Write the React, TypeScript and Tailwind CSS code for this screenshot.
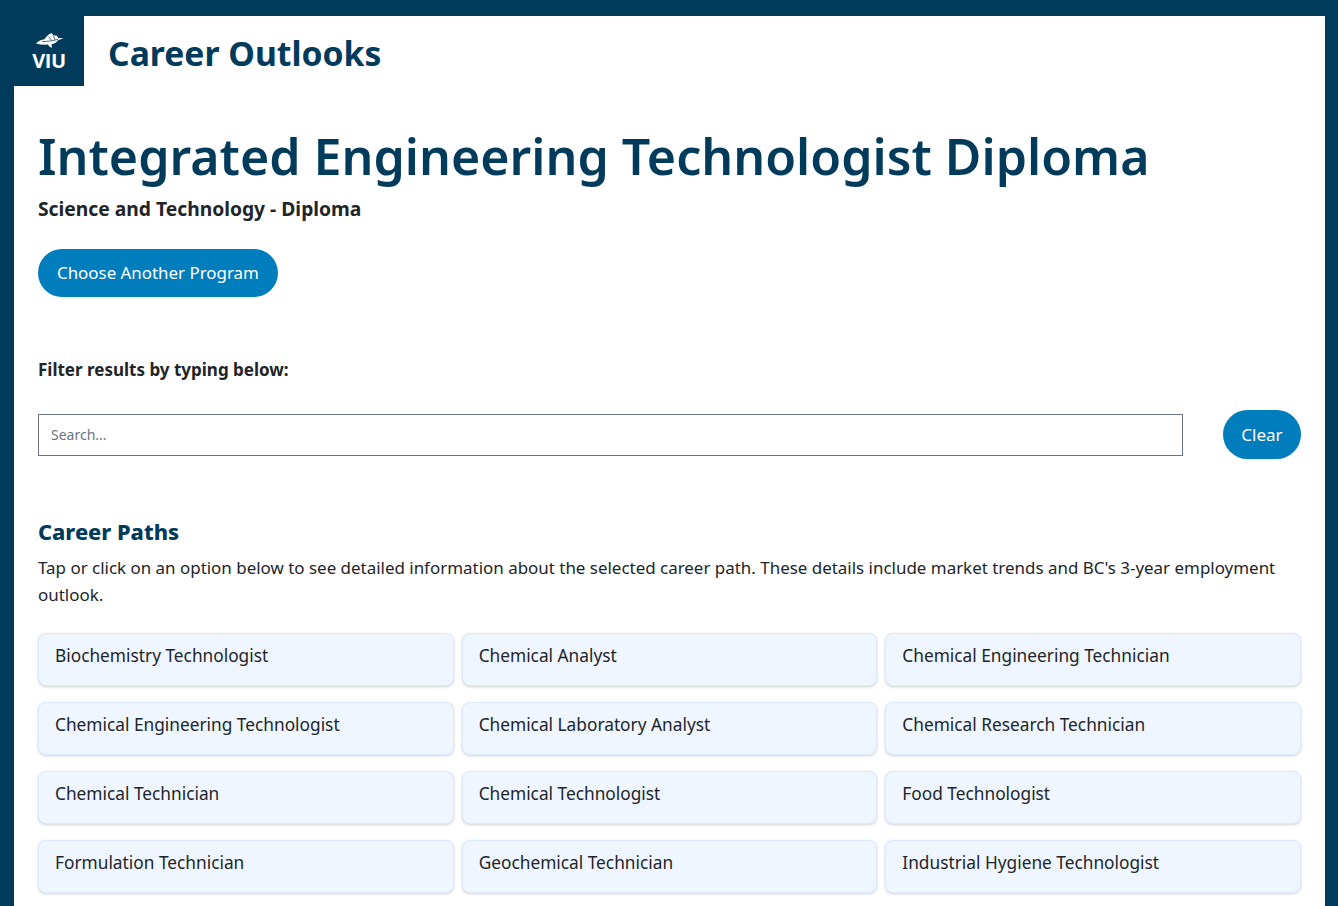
const careers = [
  "Biochemistry Technologist",
  "Chemical Analyst",
  "Chemical Engineering Technician",
  "Chemical Engineering Technologist",
  "Chemical Laboratory Analyst",
  "Chemical Research Technician",
  "Chemical Technician",
  "Chemical Technologist",
  "Food Technologist",
  "Formulation Technician",
  "Geochemical Technician",
  "Industrial Hygiene Technologist",
];

function Logo() {
  return (
    <div className="flex h-[70px] w-[70px] shrink-0 flex-col items-center bg-[#003b5c] pt-[17px] text-white">
      <svg width="28" height="15" viewBox="0 0 28 15" className="ml-[1px]">
        <path
          fill="#fff"
          d="M0 10.5C2.5 8 5.5 6.5 8.5 6.2C10 4 12 1.5 15.5 0L17.5 2.6L20.5 2.4L22.5 5L27.5 5.2L22 7.2C20.5 9.5 18 10.8 15.5 11.2L16 14.8C14 14.2 12.6 13 12 11.6C8 12 4 11.5 0 10.5Z"
        />
        <path stroke="#003b5c" strokeWidth="0.7" fill="none" d="M6 8.6C11 8.6 17 7.8 22 6.4M12.5 3.5L15.5 7.4M17.5 3L19 7" />
      </svg>
      <span className="mt-[3px] text-[20px] leading-[20px] font-bold tracking-[-0.4px] font-['Open_Sans',sans-serif]">VIU</span>
    </div>
  );
}

export default function App() {
  return (
    <div className="h-[906px] overflow-hidden bg-[#003b5c] pt-4 pr-[13px] pl-[14px] font-['Noto_Sans',sans-serif] text-[#212529]">
      <div className="h-full bg-white">
        <header className="flex items-center">
          <Logo />
          <p className="mt-[3px] ml-6 text-[33.7px] leading-[40px] font-bold text-[#003b5c]">Career Outlooks</p>
        </header>
        <main className="px-6 pt-[38px]">
          <h1 className="text-[50.1px] leading-[64px] font-semibold text-[#003b5c] whitespace-nowrap">Integrated Engineering Technologist Diploma</h1>
          <p className="mt-[8px] text-[19.25px] leading-[26px] font-bold">Science and Technology - Diploma</p>
          <button className="mt-[27px] block h-12 rounded-full bg-[#007dbc] px-[19px] text-[16.9px] text-white">Choose Another Program</button>
          <p className="mt-[61px] text-[17px] leading-[24px] font-bold">Filter results by typing below:</p>
          <div className="mt-[28px] flex items-center justify-between">
            <input
              placeholder="Search..."
              className="h-[42px] w-[1145px] border border-[#6c757d] bg-white px-3 text-[14px] placeholder:text-[#6c757d]"
            />
            <button className="h-[49px] w-[78px] rounded-full bg-[#007dbc] text-[17px] text-white">Clear</button>
          </div>
          <h2 className="mt-[59px] text-[21.8px] leading-[28px] font-extrabold text-[#003b5c]">Career Paths</h2>
          <p className="mt-[8px] text-[16.95px] leading-[27px] text-[#212529]">
            Tap or click on an option below to see detailed information about the selected career path. These details include market trends and BC's 3-year employment outlook.
          </p>
          <div className="mt-[25px] grid grid-cols-3 gap-x-2 gap-y-4">
            {careers.map((c) => (
              <div
                key={c}
                className="h-[53px] rounded-lg border border-[#dbeafe] bg-[#eff6ff] px-4 pt-[9px] text-[17.3px] leading-[26px] text-[#212529] shadow-[0_1px_3px_rgba(0,0,0,0.18)]"
              >
                {c}
              </div>
            ))}
          </div>
        </main>
      </div>
    </div>
  );
}
